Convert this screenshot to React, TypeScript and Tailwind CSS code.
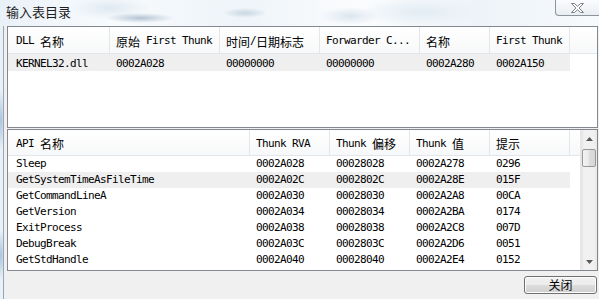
import React from "react";

const topCols = [
  { label: "DLL 名称", w: "w-[102px] pl-[8px]" },
  { label: "原始 First Thunk", w: "w-[110px] pl-[6px]" },
  { label: "时间/日期标志", w: "w-[100px] pl-[6px]" },
  { label: "Forwarder C...", w: "w-[100px] pl-[6px]" },
  { label: "名称", w: "w-[70px] pl-[6px]" },
  { label: "First Thunk", w: "w-[80px] pl-[6px]" },
];

const topRows = [["KERNEL32.dll", "0002A028", "00000000", "00000000", "0002A280", "0002A150"]];

const apiCols = [
  { label: "API 名称", w: "w-[242px] pl-[8px]" },
  { label: "Thunk RVA", w: "w-[80px] pl-[6px]" },
  { label: "Thunk 偏移", w: "w-[80px] pl-[6px]" },
  { label: "Thunk 值", w: "w-[80px] pl-[6px]" },
  { label: "提示", w: "w-[80px] pl-[6px]" },
];

const apiRows = [
  ["Sleep", "0002A028", "00028028", "0002A278", "0296"],
  ["GetSystemTimeAsFileTime", "0002A02C", "0002802C", "0002A28E", "015F"],
  ["GetCommandLineA", "0002A030", "00028030", "0002A2A8", "00CA"],
  ["GetVersion", "0002A034", "00028034", "0002A2BA", "0174"],
  ["ExitProcess", "0002A038", "00028038", "0002A2C8", "007D"],
  ["DebugBreak", "0002A03C", "0002803C", "0002A2D6", "0051"],
  ["GetStdHandle", "0002A040", "00028040", "0002A2E4", "0152"],
];

// CJK runs get the wider CJK font, the rest stays monospace
function Mixed({ s }: { s: string }) {
  return (
    <>
      {s.split(/([\u4e00-\u9fff]+)/).map((p, i) =>
        /[\u4e00-\u9fff]/.test(p) ? (
          <span key={i} className="font-['Noto_Sans_CJK_SC',sans-serif] text-[12px] tracking-normal">
            {p}
          </span>
        ) : (
          <span key={i} className="whitespace-pre">{p}</span>
        )
      )}
    </>
  );
}

function HeaderCell({ label, w }: { label: string; w: string }) {
  return (
    <div className={`${w} h-full shrink-0 flex items-center pt-[3px] border-r border-[#e3e6ea]`}>
      <Mixed s={label} />
    </div>
  );
}

function Arrow({ up }: { up?: boolean }) {
  return (
    <svg width="7" height="4" viewBox="0 0 7 4">
      <polygon points={up ? "3.5,0 7,4 0,4" : "0,0 7,0 3.5,4"} fill="#5a5a5a" />
    </svg>
  );
}

export default function App() {
  return (
    <div className="w-[599px] h-[299px] overflow-hidden flex flex-col text-[11px] tracking-[-0.62px] text-black font-['DejaVu_Sans_Mono',monospace] bg-[radial-gradient(ellipse_34px_5px_at_140px_18px,#b4c4d2,transparent),radial-gradient(ellipse_22px_5px_at_245px_13px,#c9d6e1,transparent),radial-gradient(ellipse_40px_12px_at_110px_8px,#dfe9f1,transparent),radial-gradient(ellipse_60px_14px_at_420px_12px,#e2ecf4,transparent),radial-gradient(ellipse_30px_9px_at_350px_16px,#dbe6ef,transparent),radial-gradient(ellipse_4px_30px_at_1px_120px,#a9c3dc,transparent),radial-gradient(ellipse_4px_25px_at_1px_255px,#a9c3dc,transparent),linear-gradient(90deg,#e9f1f8_0%,#f8fbfd_18%,#eef4f9_40%,#fbfcfd_60%,#edf3f8_80%,#f7fafc_100%)]">
      <div className="h-[26px] shrink-0 flex justify-between items-start">
        <div className="pl-[6px] pt-[3px] text-[13px] leading-[17px] tracking-normal text-[#1e1e1e] font-['Noto_Sans_CJK_SC',sans-serif]">
          输入表目录
        </div>
        <div className="w-[44px] h-[16px] border-l border-b border-[#8e949b] rounded-bl-[4px] bg-[linear-gradient(#fbfcfd,#e9eef3)] flex items-center justify-center">
          <svg width="13" height="10" viewBox="-0.5 -0.5 13 10">
            <polygon
              points="0,0 3,0 6,2.8 9,0 12,0 7.6,4.5 12,9 9,9 6,6.2 3,9 0,9 4.4,4.5"
              fill="#ffffff"
              stroke="#7b7f84"
              strokeWidth="1"
              strokeLinejoin="round"
            />
          </svg>
        </div>
      </div>

      <div className="flex-1 ml-[3px] border-l border-[#9aa6b1] bg-[#f0f0f0] pl-[3px] pr-[1px] flex flex-col">
        {/* DLL list */}
        <div className="h-[102px] shrink-0 border border-[#828790] bg-white flex flex-col">
          <div className="h-[27px] shrink-0 flex border-b border-[#e3e6ea] bg-[linear-gradient(#ffffff,#f7f8f9)]">
            {topCols.map((c) => (
              <HeaderCell key={c.label} label={c.label} w={c.w} />
            ))}
            <div className="flex-1" />
          </div>
          {topRows.map((r, i) => (
            <div key={i} className="flex">
              <div className="flex h-[17px] bg-[#efefef] leading-[17px]">
                {r.map((v, j) => (
                  <div key={j} className={`${topCols[j].w} shrink-0 pt-[1px]`}>
                    {v}
                  </div>
                ))}
              </div>
            </div>
          ))}
        </div>

        {/* API list */}
        <div className="h-[142px] mt-[1px] shrink-0 border border-[#828790] bg-white flex">
          <div className="flex-1 flex flex-col">
            <div className="h-[26px] shrink-0 flex border-b border-[#e3e6ea] bg-[linear-gradient(#ffffff,#f7f8f9)]">
              {apiCols.map((c) => (
                <HeaderCell key={c.label} label={c.label} w={c.w} />
              ))}
              <div className="flex-1" />
            </div>
            {apiRows.map((r, i) => (
              <div key={i} className="flex">
                <div className={`flex h-[16px] leading-[16px] ${i === 1 ? "bg-[#efefef]" : ""}`}>
                  {r.map((v, j) => (
                    <div key={j} className={`${apiCols[j].w} shrink-0`}>
                      {v}
                    </div>
                  ))}
                </div>
              </div>
            ))}
          </div>
          {/* scrollbar */}
          <div className="w-[17px] shrink-0 flex flex-col bg-[linear-gradient(90deg,#e3e3e3,#f1f1f1_20%,#f1f1f1_80%,#e8e8e8)] border-l border-[#e6e6e6]">
            <div className="h-[17px] flex items-center justify-center">
              <Arrow up />
            </div>
            <div className="mx-[1px] h-[18px] mt-[2px] rounded-[2px] border border-[#979797] bg-[linear-gradient(90deg,#f4f4f4,#e8e8e8_50%,#dcdcdc_51%,#d7d7d7)]" />
            <div className="flex-1" />
            <div className="h-[17px] flex items-center justify-center">
              <Arrow />
            </div>
          </div>
        </div>

        <div className="mt-[5px] flex justify-end pr-[1px]">
          <button className="w-[73px] h-[18px] rounded-[3px] border border-[#707070] bg-[linear-gradient(#f2f2f2,#ebebeb_50%,#dddddd_51%,#cfcfcf)] shadow-[inset_0_0_0_1px_#fcfcfc] flex items-center justify-center text-[12px] tracking-normal leading-none font-['Noto_Sans_CJK_SC',sans-serif] text-black">
            关闭
          </button>
        </div>
      </div>
    </div>
  );
}
